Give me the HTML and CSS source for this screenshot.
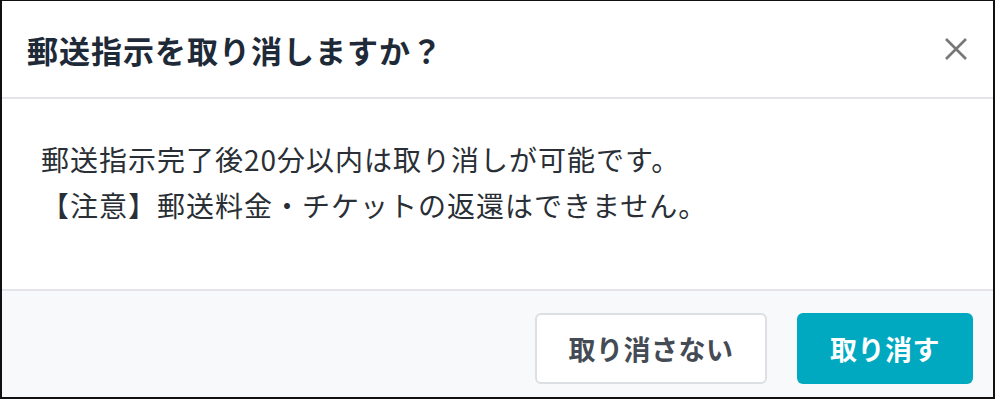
FILE: index.html
```html
<!DOCTYPE html>
<html lang="ja">
<head>
    <meta charset="UTF-8">
    <title>郵送指示の取り消し</title>
    <link rel="stylesheet" href="styles.css">
</head>
<body>
    <div class="dialog">
        <div class="dialog-header">
            <h2>郵送指示を取り消しますか？</h2>
            <button class="close-button" aria-label="閉じる">
                <svg width="24" height="24" viewBox="0 0 24 24">
                    <path d="M2 2 L22 22 M22 2 L2 22" stroke="#777" stroke-width="2.6" fill="none"/>
                </svg>
            </button>
        </div>
        <div class="dialog-body">
            <p>郵送指示完了後20分以内は取り消しが可能です。</p>
            <p>【注意】郵送料金・チケットの返還はできません。</p>
        </div>
        <div class="dialog-footer">
            <button class="cancel-button">取り消さない</button>
            <button class="confirm-button">取り消す</button>
        </div>
    </div>
</body>
</html>
```
FILE: styles.css
```css
body {
    margin: 0;
    font-family: "Noto Sans CJK JP", "Noto Sans", sans-serif;
    background: #ffffff;
}
.dialog {
    width: 995px;
    height: 399px;
    box-sizing: border-box;
    border: 2px solid #111;
    border-top-width: 1px;
    display: flex;
    flex-direction: column;
    background: #ffffff;
}
.dialog-header {
    height: 96px;
    flex-shrink: 0;
    display: flex;
    align-items: center;
    justify-content: space-between;
    padding: 0 25px 0 25px;
    border-bottom: 2px solid #e4e4ea;
}
.dialog-header h2 {
    margin: 0;
    font-size: 31px;
    font-weight: bold;
    color: #1e2a38;
    letter-spacing: 1px;
}
.close-button {
    background: none;
    border: none;
    padding: 0;
    width: 24px;
    height: 24px;
    cursor: pointer;
}
.dialog-body {
    flex: 1;
    padding: 37px 40px 0 39px;
}
.dialog-body p {
    margin: 0;
    font-size: 28px;
    line-height: 46px;
    letter-spacing: 1px;
    color: #2a2f36;
}
.dialog-footer {
    height: 108px;
    flex-shrink: 0;
    box-sizing: border-box;
    background: #f8f9fb;
    border-top: 2px solid #e4e4ea;
    display: flex;
    justify-content: flex-end;
    align-items: flex-start;
    gap: 30px;
    padding: 22px 20px 0 0;
}
.cancel-button, .confirm-button {
    height: 71px;
    border-radius: 6px;
    font-family: inherit;
    font-size: 27px;
    font-weight: bold;
    letter-spacing: 0.5px;
    cursor: pointer;
}
.cancel-button {
    width: 232px;
    background: #ffffff;
    border: 2px solid #dcdfe4;
    color: #444b54;
}
.confirm-button {
    width: 176px;
    background: #00a9c0;
    border: none;
    color: #ffffff;
}
```
